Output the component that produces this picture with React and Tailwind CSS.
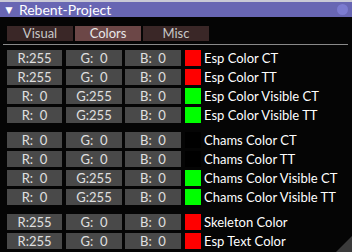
import React from "react";

const groups = [
  [
    ["R:255", "G:  0", "B:  0", "bg-[#ff0000]", "Esp Color CT"],
    ["R:255", "G:  0", "B:  0", "bg-[#ff0000]", "Esp Color TT"],
    ["R:  0", "G:255", "B:  0", "bg-[#00ff00]", "Esp Color Visible CT"],
    ["R:  0", "G:255", "B:  0", "bg-[#00ff00]", "Esp Color Visible TT"],
  ],
  [
    ["R:  0", "G:  0", "B:  0", "bg-[#000000]", "Chams Color CT"],
    ["R:  0", "G:  0", "B:  0", "bg-[#000000]", "Chams Color TT"],
    ["R:  0", "G:255", "B:  0", "bg-[#00ff00]", "Chams Color Visible CT"],
    ["R:  0", "G:255", "B:  0", "bg-[#00ff00]", "Chams Color Visible TT"],
  ],
  [
    ["R:255", "G:  0", "B:  0", "bg-[#ff0000]", "Skeleton Color"],
    ["R:255", "G:  0", "B:  0", "bg-[#ff0000]", "Esp Text Color"],
  ],
];

function Box({ text, w }) {
  return (
    <div
      className={`${w} h-[16px] bg-[#494949] text-[#e0e0e0] flex items-center justify-center whitespace-pre text-[13px] leading-none`}
    >
      {text}
    </div>
  );
}

export default function App() {
  return (
    <div
      className="w-[352px] h-[252px] bg-[#050505] relative overflow-hidden flex flex-col"
      style={{ fontFamily: "Lato, 'Noto Sans', sans-serif" }}
    >
      <div className="h-[2px] bg-[#c9c9d6]" />
      <div className="h-[15px] bg-[#6866b3] flex items-center pl-[3px] relative">
        <span className="text-white text-[12px] leading-none mr-[4px]">▼</span>
        <span className="text-white text-[14px] leading-none">Rebent-Project</span>
        <div className="absolute right-[4px] top-[2px] w-[11px] h-[11px] rounded-full bg-[#7c7bd0]" />
      </div>
      <div className="flex pl-[7px] mt-[9px] gap-[2px]">
        <div className="w-[66px] h-[15px] bg-[#3a2727] text-[#c8c8c8] text-[13px] leading-none flex items-center justify-center">Visual</div>
        <div className="w-[66px] h-[15px] bg-[#6c4747] text-[#e8e8e8] text-[13px] leading-none flex items-center justify-center">Colors</div>
        <div className="w-[66px] h-[15px] bg-[#3a2727] text-[#c8c8c8] text-[13px] leading-none flex items-center justify-center">Misc</div>
      </div>
      <div className="mx-[3px] mt-[3px] h-[1px] bg-[#8a8a8a] w-[345px]" />
      <div className="flex flex-col gap-[9px] mt-[5px]">
        {groups.map((g, gi) => (
          <div key={gi} className="flex flex-col gap-[3px]">
            {g.map((r, ri) => (
              <div key={ri} className="flex items-center pl-[7px]">
                <Box text={r[0]} w="w-[55px]" />
                <div className="w-[4px]" />
                <Box text={r[1]} w="w-[56px]" />
                <div className="w-[3px]" />
                <Box text={r[2]} w="w-[56px]" />
                <div className="w-[4px]" />
                <div className={`w-[16px] h-[16px] ${r[3]}`} />
                <span className="ml-[3px] text-white text-[13px] leading-none whitespace-nowrap">{r[4]}</span>
              </div>
            ))}
          </div>
        ))}
      </div>
      <div
        className="absolute right-0 bottom-0 w-[16px] h-[16px] bg-[#3a3a3a]"
        style={{ clipPath: "polygon(100% 0, 100% 100%, 0 100%)" }}
      />
    </div>
  );
}
